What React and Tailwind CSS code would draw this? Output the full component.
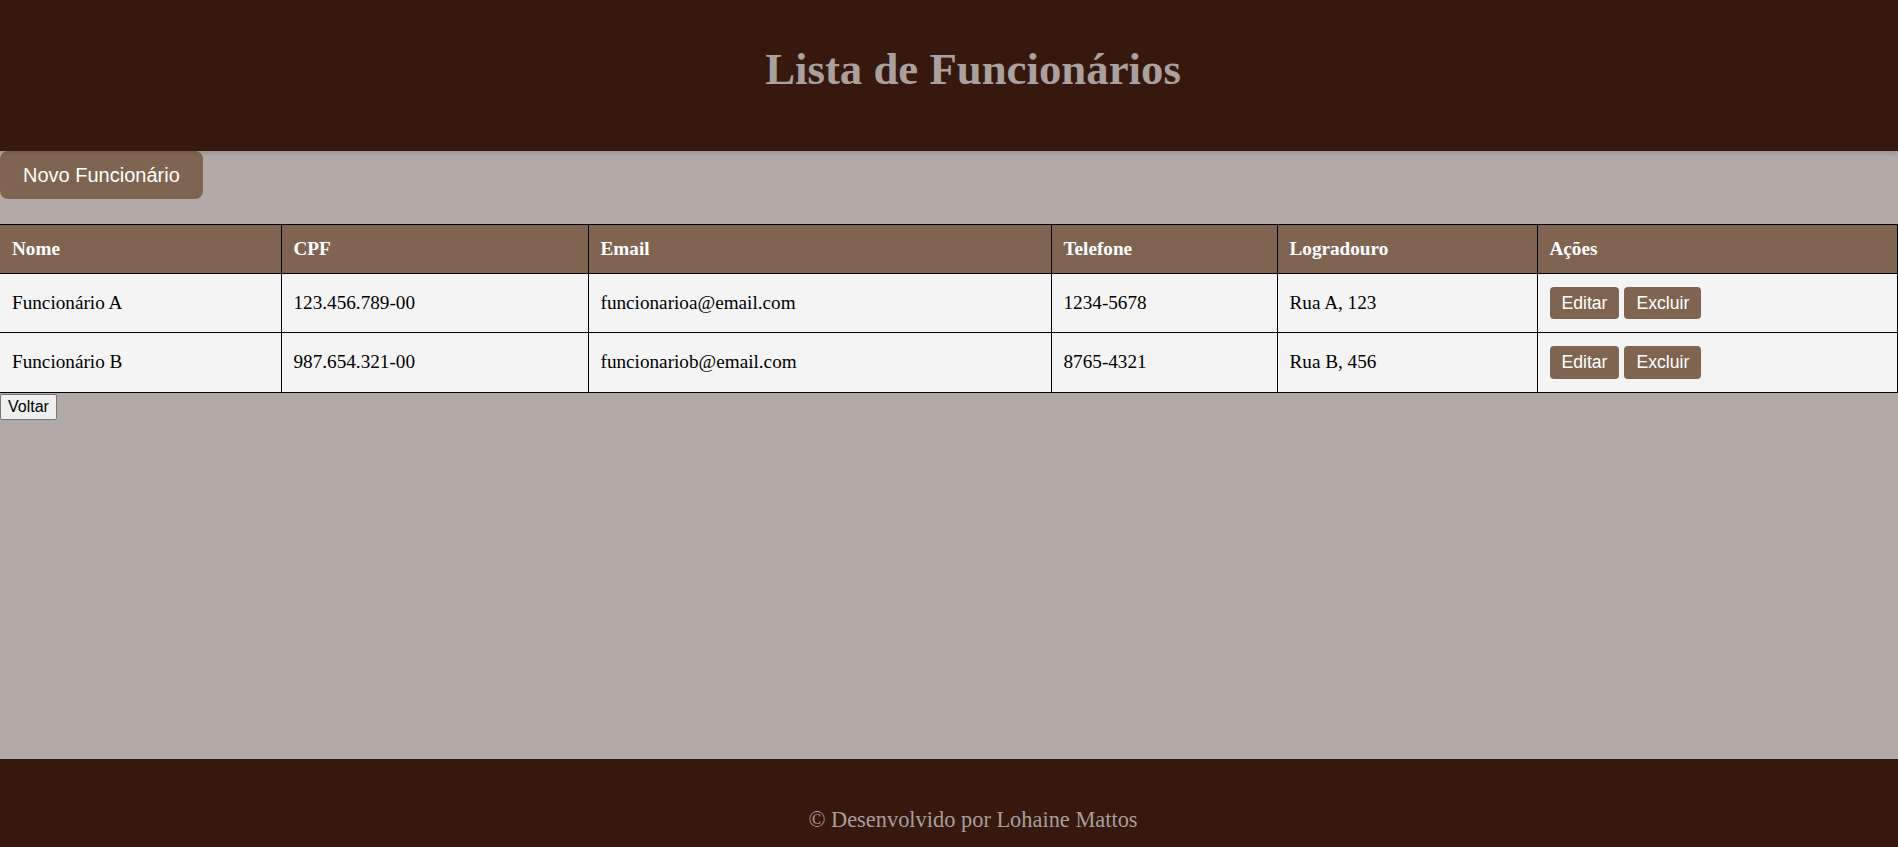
const funcionarios = [
  {
    nome: 'Funcionário A',
    cpf: '123.456.789-00',
    email: 'funcionarioa@email.com',
    telefone: '1234-5678',
    logradouro: 'Rua A, 123',
  },
  {
    nome: 'Funcionário B',
    cpf: '987.654.321-00',
    email: 'funcionariob@email.com',
    telefone: '8765-4321',
    logradouro: 'Rua B, 456',
  },
];

const columns = [
  { label: 'Nome', width: 'w-[281px] border-l-0' },
  { label: 'CPF', width: 'w-[307px]' },
  { label: 'Email', width: 'w-[463px]' },
  { label: 'Telefone', width: 'w-[226px]' },
  { label: 'Logradouro', width: 'w-[260px]' },
  { label: 'Ações', width: '' },
];

export default function App() {
  return (
    <div className="bg-[#b3aaa7] min-h-screen font-['Liberation_Serif',serif]">
      {/* Header */}
      <header className="relative z-10 h-[151px] bg-[#36180e] pl-12 pt-[44px] text-center shadow-[0_2px_4px_rgba(0,0,0,0.15)]">
        <h1 className="text-[44.8px] font-bold leading-[1.15] text-[#aaa09d]">Lista de Funcionários</h1>
      </header>

      {/* Main */}
      <main className="h-[608px]">
        <button className="block rounded-[8px] bg-[#7f6551] px-[23px] py-[12.5px] font-['Liberation_Sans',sans-serif] text-[20px] leading-[1.15] text-white">
          Novo Funcionário
        </button>

        <table className="mt-[25px] w-full table-fixed border-collapse text-[19.2px] leading-[1.15]">
          <thead>
            <tr className="bg-[#7f6551]">
              {columns.map((c) => (
                <th
                  key={c.label}
                  className={`${c.width} border border-black px-[12px] py-[13px] text-left font-bold text-white`}
                >
                  {c.label}
                </th>
              ))}
            </tr>
          </thead>
          <tbody>
            {funcionarios.map((f) => (
              <tr key={f.cpf} className="bg-[#f4f4f4] text-black">
                <td className="border border-l-0 border-black px-[12px] py-[13px]">{f.nome}</td>
                <td className="border border-black px-[12px] py-[13px]">{f.cpf}</td>
                <td className="border border-black px-[12px] py-[13px]">{f.email}</td>
                <td className="border border-black px-[12px] py-[13px]">{f.telefone}</td>
                <td className="border border-black px-[12px] py-[13px]">{f.logradouro}</td>
                <td className="border border-black px-[12px] py-[13px]">
                  <div className="flex gap-[5px] font-['Liberation_Sans',sans-serif] text-[17.6px] leading-[1.15] text-white">
                    <button className="rounded-[4px] bg-[#7f6551] px-[12px] py-[6px]">Editar</button>
                    <button className="rounded-[4px] bg-[#7f6551] px-[12px] py-[6px]">Excluir</button>
                  </div>
                </td>
              </tr>
            ))}
          </tbody>
        </table>

        <button className="mt-[1px] block rounded-[2px] border border-[#767676] bg-[#efefef] px-[7px] py-[3px] font-['Liberation_Sans',sans-serif] text-[16px] leading-[1.15] text-black">
          Voltar
        </button>
      </main>

      {/* Footer */}
      <footer className="bg-[#36180e] pl-12 pt-[48px] pb-[48px] text-center">
        <p className="text-[22.4px] leading-[1.15] text-[#a89e9b]">© Desenvolvido por Lohaine Mattos</p>
      </footer>
    </div>
  );
}
